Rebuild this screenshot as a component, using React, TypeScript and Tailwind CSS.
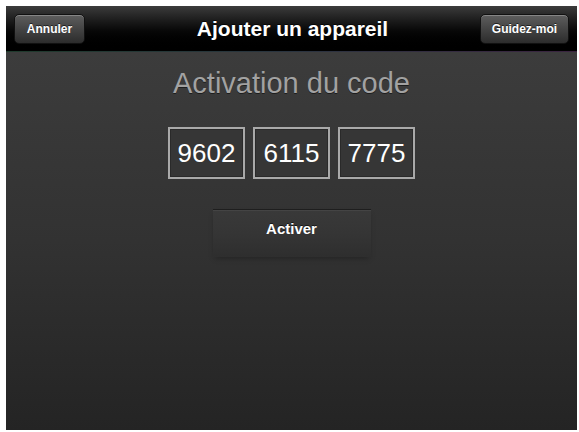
export default function App() {
  const code = ["9602", "6115", "7775"];

  return (
    <div className="w-[579px] h-[432px] bg-white pl-[6px] pt-[6px] pr-[2px] pb-[2px] font-['Liberation_Sans',Arial,sans-serif]">
      <div className="flex h-full flex-col">
        {/* nav bar */}
        <div className="grid h-[45px] grid-cols-[1fr_auto_1fr] items-center bg-gradient-to-b from-[#3c3c3c] via-[#080808] via-55% to-black px-[8px]">
          <button className="h-[30px] w-[71px] justify-self-start rounded-[5px] border border-[#111] bg-gradient-to-b from-[#5e5e5e] to-[#2c2c2c] text-[12px] font-bold text-white shadow-[inset_0_1px_0_rgba(255,255,255,0.25)] [text-shadow:0_-1px_0_rgba(0,0,0,0.6)]">
            Annuler
          </button>
          <h1 className="pl-[2px] text-[21px] font-bold text-white [text-shadow:0_-1px_0_rgba(0,0,0,0.7)]">
            Ajouter un appareil
          </h1>
          <button className="h-[30px] w-[89px] justify-self-end rounded-[5px] border border-[#111] bg-gradient-to-b from-[#5e5e5e] to-[#2c2c2c] text-[12px] font-bold text-white shadow-[inset_0_1px_0_rgba(255,255,255,0.25)] [text-shadow:0_-1px_0_rgba(0,0,0,0.6)]">
            Guidez-moi
          </button>
        </div>
        <div className="h-[1px] bg-gradient-to-r from-[#1f3a2c] via-[#2a3440] to-[#3a2440]" />

        {/* content */}
        <div className="flex flex-1 flex-col items-center bg-gradient-to-b from-[#3c3c3c] via-[#323232] to-[#242424] pt-[15px]">
          <h2 className="text-[29px] leading-[32px] text-[#a2a2a2] [text-shadow:0_1px_0_rgba(0,0,0,0.5)]">
            Activation du code
          </h2>

          <div className="mt-[28px] flex gap-[8px]">
            {code.map((c) => (
              <div
                key={c}
                className="flex h-[52px] w-[77px] items-center justify-center border-2 border-[#a9a9a9] bg-[#363636] text-[26px] text-white shadow-[inset_0_0_0_1px_#2a2a2a]"
              >
                {c}
              </div>
            ))}
          </div>

          <button className="mt-[30px] h-[48px] w-[158px] border-t border-[#1e1e1e] bg-gradient-to-b from-[#393939] via-[#353535] to-[#2e2e2e] pb-[8px] text-[15px] font-bold text-white shadow-[inset_0_1px_0_rgba(255,255,255,0.06),0_3px_6px_-2px_rgba(0,0,0,0.3)] [text-shadow:0_-1px_0_rgba(0,0,0,0.6)]">
            Activer
          </button>
        </div>
      </div>
    </div>
  );
}
